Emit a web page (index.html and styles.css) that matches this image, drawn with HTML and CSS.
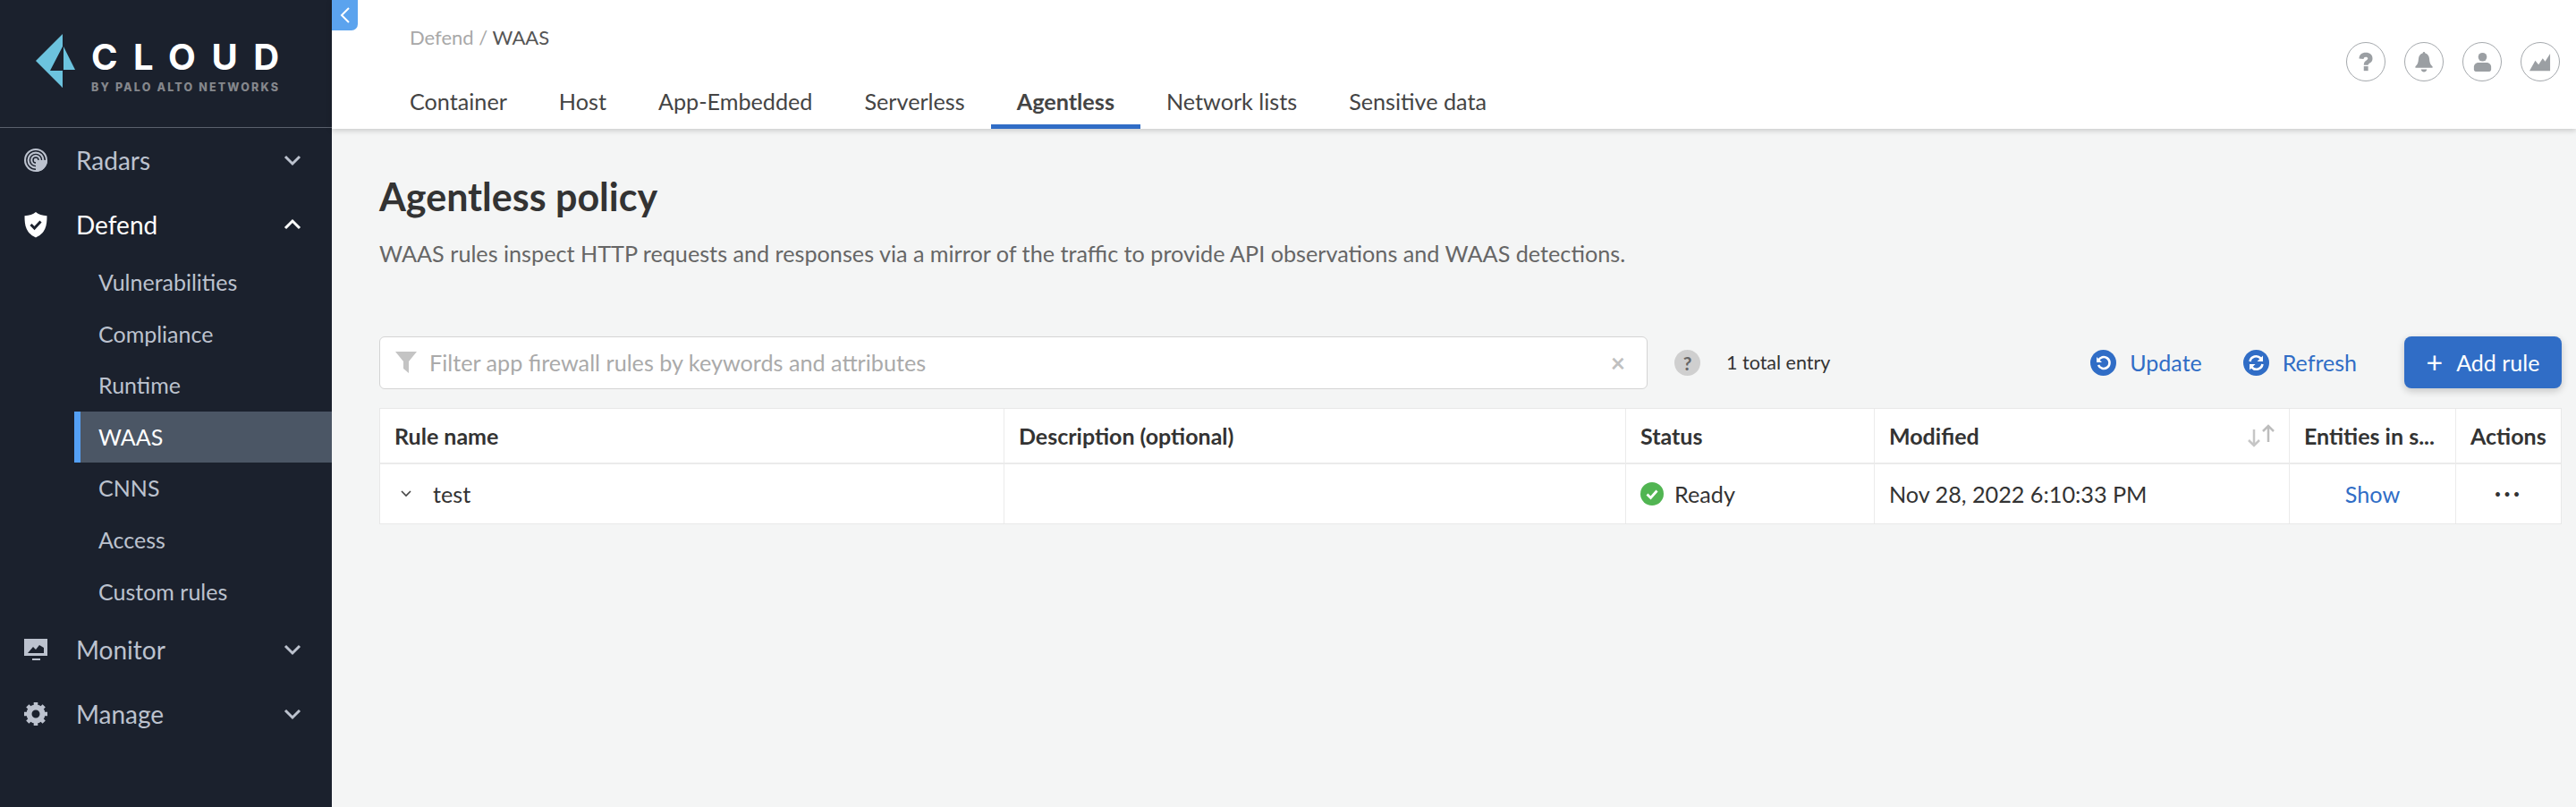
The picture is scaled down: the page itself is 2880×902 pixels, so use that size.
FILE: index.html
```html
<!DOCTYPE html>
<html lang="en">
<head>
    <meta charset="UTF-8">
    <title>Agentless policy | Defend / WAAS</title>
    <link rel="stylesheet" href="styles.css">
</head>
<body>
    <aside class="sidebar">
        <div class="logo">
            <svg class="logo-mark" width="46" height="62" viewBox="38 37 46 62">
                <polygon points="70,38 40,68 70,98 70,79 56,79 70,52" fill="#6cc3de"/>
                <polygon points="71,52 84,78 71,78" fill="#6cc3de"/>
                <polygon points="56,79 70,79 70,98" fill="#6cc3de"/>
            </svg>
            <div class="logo-text">
                <div class="logo-name">CLOUD</div>
                <div class="logo-sub">BY PALO ALTO NETWORKS</div>
            </div>
        </div>

        <nav class="nav">
            <div class="nav-item">
                <svg class="nav-icon" width="28" height="28" viewBox="0 0 28 28">
                    <circle cx="14" cy="14" r="13" fill="#bcc2ce"/>
                    <circle cx="14" cy="14" r="10.2" fill="none" stroke="#1b212d" stroke-width="1.4"/>
                    <circle cx="14" cy="14" r="6.6" fill="none" stroke="#1b212d" stroke-width="1.4"/>
                    <circle cx="14" cy="14" r="3" fill="none" stroke="#1b212d" stroke-width="1.4"/>
                    <path d="M14 14h13a13 13 0 0 1 -13 13z" fill="#bcc2ce"/>
                </svg>
                <span class="nav-label">Radars</span>
                <svg class="nav-caret" width="20" height="14" viewBox="0 0 20 14"><path d="M2 3l8 8 8-8"/></svg>
            </div>
            <div class="nav-item active">
                <svg class="nav-icon" width="28" height="30" viewBox="0 0 28 30">
                    <path d="M14 1c3 2.500 7 4 12.500 4.200 0 10 -1 19 -12.500 24.300C2.500 24.200 1.500 15.200 1.500 5.200 7 5 11 3.500 14 1z" fill="#fff"/>
                    <path d="M8.500 15l4 4 7-7.500" fill="none" stroke="#1b212d" stroke-width="3"/>
                </svg>
                <span class="nav-label">Defend</span>
                <svg class="nav-caret" width="20" height="14" viewBox="0 0 20 14"><path d="M2 11l8-8 8 8"/></svg>
            </div>

            <a class="sub-item">Vulnerabilities</a>
            <a class="sub-item">Compliance</a>
            <a class="sub-item">Runtime</a>
            <a class="sub-item current">WAAS</a>
            <a class="sub-item">CNNS</a>
            <a class="sub-item">Access</a>
            <a class="sub-item">Custom rules</a>

            <div class="nav-item">
                <svg class="nav-icon" width="28" height="26" viewBox="0 0 28 26">
                    <path d="M1 1h26v19H1z" fill="#bcc2ce"/>
                    <path d="M5 17l6-7 3 3 4-5 5 3v6z" fill="#1b212d"/>
                    <path d="M10 23h9v2h-9z" fill="#bcc2ce"/>
                </svg>
                <span class="nav-label">Monitor</span>
                <svg class="nav-caret" width="20" height="14" viewBox="0 0 20 14"><path d="M2 3l8 8 8-8"/></svg>
            </div>
            <div class="nav-item">
                <svg class="nav-icon" width="28" height="28" viewBox="0 0 28 28">
                    <circle cx="14" cy="14" r="7.500" fill="none" stroke="#bcc2ce" stroke-width="6"/>
                    <path d="M14 1v5M14 22v5M1 14h5M22 14h5M4.800 4.800l3.500 3.500M19.700 19.700l3.500 3.500M23.200 4.800l-3.500 3.500M8.300 19.700l-3.500 3.500" stroke="#bcc2ce" stroke-width="4.600"/>
                </svg>
                <span class="nav-label">Manage</span>
                <svg class="nav-caret" width="20" height="14" viewBox="0 0 20 14"><path d="M2 3l8 8 8-8"/></svg>
            </div>
        </nav>
    </aside>

    <button class="collapse">
        <svg width="14" height="20" viewBox="0 0 14 20"><path d="M11 2l-8 8 8 8"/></svg>
    </button>

    <main class="main">
        <header class="topbar">
            <div class="topbar-left">
                <div class="crumbs">Defend / <span class="crumb-now">WAAS</span></div>
                <div class="tabs">
                    <div class="tab">Container</div>
                    <div class="tab">Host</div>
                    <div class="tab">App-Embedded</div>
                    <div class="tab">Serverless</div>
                    <div class="tab selected">Agentless</div>
                    <div class="tab">Network lists</div>
                    <div class="tab">Sensitive data</div>
                </div>
            </div>
            <div class="top-icons">
                <div class="round-btn">
                    <svg width="18" height="22" viewBox="0 0 24 26" preserveAspectRatio="none" fill="#9b9fa3">
                        <path d="M2 9C2 4 6 1 12 1s10 3 10 7.500c0 4-2.500 5.300-4.500 6.500-1.500.9-2 1.500-2 2.500H9c0-3.500 1.500-4.800 3.500-6 1.500-.9 2.500-1.500 2.500-2.800 0-1.200-1.200-2-3-2-2 0-3 1-3.300 2.800z"/>
                        <path d="M9 19h6.500v6H9z"/>
                    </svg>
                </div>
                <div class="round-btn">
                    <svg width="20" height="23" viewBox="0 0 24 26" preserveAspectRatio="none" fill="#9b9fa3">
                        <path d="M12 0c1 0 1.500.7 1.700 1.700C17 2.500 19 5 19.300 9c.3 5 1.500 7 4.200 9.500v1.500H.5v-1.500C3.200 16 4.400 14 4.700 9 5 5 7 2.500 10.300 1.700 10.500.7 11 0 12 0z"/>
                        <path d="M8 22h8c-.5 2-2 3.500-4 3.500S8.500 24 8 22z"/>
                    </svg>
                </div>
                <div class="round-btn">
                    <svg width="21" height="23" viewBox="0 0 24 26" preserveAspectRatio="none" fill="#9b9fa3">
                        <circle cx="12" cy="6.500" r="5.500"/>
                        <path d="M1 19c0-3.500 3-5.500 6-5.500h10c3 0 6 2 6 5.500v3c0 2-1.500 3-3.500 3h-15C2.500 25 1 24 1 22z"/>
                    </svg>
                </div>
                <div class="round-btn">
                    <svg width="24" height="21" viewBox="0 0 26 24" preserveAspectRatio="none" fill="#9b9fa3">
                        <path d="M0 23L7 10l4 5 5-8 3 4 6-10v22z"/>
                    </svg>
                </div>
            </div>
        </header>

        <section class="content">
            <h1>Agentless policy</h1>
            <p class="desc">WAAS rules inspect HTTP requests and responses via a mirror of the traffic to provide API observations and WAAS detections.</p>

            <div class="toolbar">
                <div class="filter">
                    <svg class="filter-icon" width="26" height="26" viewBox="0 0 26 26" fill="#c4c4c4">
                        <path d="M1 1h24L16 12v13l-6-5v-8z"/>
                    </svg>
                    <span class="filter-text">Filter app firewall rules by keywords and attributes</span>
                    <span class="filter-clear">×</span>
                </div>
                <div class="help-dot">?</div>
                <div class="entries">1 total entry</div>
                <div class="actions">
                    <a class="link-btn">
                        <svg width="29" height="29" viewBox="0 0 29 29">
                            <circle cx="14.500" cy="14.500" r="14.500" fill="#306dc6"/>
                            <path d="M9 12a6.500 6.500 0 1 1 0 5" fill="none" stroke="#fff" stroke-width="2.600"/>
                            <path d="M7 8v6h6z" fill="#fff"/>
                        </svg>
                        Update
                    </a>
                    <a class="link-btn">
                        <svg width="29" height="29" viewBox="0 0 29 29">
                            <circle cx="14.500" cy="14.500" r="14.500" fill="#306dc6"/>
                            <path d="M7.500 13a7 7 0 0 1 12-3.500" fill="none" stroke="#fff" stroke-width="2.600"/>
                            <path d="M21.500 16a7 7 0 0 1 -12 3.500" fill="none" stroke="#fff" stroke-width="2.600"/>
                            <path d="M22 6.500v6.500h-6.500zM7 22.500V16h6.500z" fill="#fff"/>
                        </svg>
                        Refresh
                    </a>
                    <button class="add-btn"><span class="plus">+</span>Add rule</button>
                </div>
            </div>

            <div class="rules">
                <div class="cell head">Rule name</div>
                <div class="cell head">Description (optional)</div>
                <div class="cell head">Status</div>
                <div class="cell head sortable">
                    Modified
                    <svg class="sort" width="34" height="26" viewBox="0 0 34 26" fill="none" stroke="#c6c6c6" stroke-width="2.500">
                        <path d="M9 6v18M3 18l6 6 6-6"/>
                        <path d="M25 20V2M19 8l6-6 6 6" stroke="#bdbdbd"/>
                    </svg>
                </div>
                <div class="cell head clip">Entities in s...</div>
                <div class="cell head">Actions</div>

                <div class="cell name">
                    <svg width="14" height="10" viewBox="0 0 14 10" fill="none" stroke="#444" stroke-width="1.600"><path d="M2 2l5 5 5-5"/></svg>
                    test
                </div>
                <div class="cell"></div>
                <div class="cell status">
                    <svg width="26" height="26" viewBox="0 0 26 26">
                        <circle cx="13" cy="13" r="13" fill="#51b552"/>
                        <path d="M7.500 13.500l4 4 7-8" fill="none" stroke="#fff" stroke-width="2.800"/>
                    </svg>
                    Ready
                </div>
                <div class="cell">Nov 28, 2022 6:10:33 PM</div>
                <div class="cell center"><a class="show">Show</a></div>
                <div class="cell center dots">•••</div>
            </div>
        </section>
    </main>
</body>
</html>
```

FILE: styles.css
```css
* {
    margin: 0;
    padding: 0;
    box-sizing: border-box;
}

html, body {
    height: 100%;
}

body {
    display: flex;
    font-family: Lato, 'Open Sans', sans-serif;
    color: #333;
    background: #f4f5f5;
    overflow: hidden;
    position: relative;
}

/* Sidebar */
.sidebar {
    width: 371px;
    flex-shrink: 0;
    background: #1b212d;
    color: #bcc2ce;
}

.logo {
    height: 143px;
    border-bottom: 1px solid #5a606c;
    display: flex;
    align-items: flex-start;
    padding: 37px 0 0 38px;
    gap: 18px;
}

.logo-text {
    padding-top: 9px;
}

.logo-name {
    font-family: Inter, sans-serif;
    font-weight: 700;
    font-size: 40px;
    line-height: 36px;
    letter-spacing: 17.5px;
    color: #fff;
}

.logo-sub {
    font-family: Inter, sans-serif;
    font-weight: 800;
    font-size: 12.500px;
    line-height: 14px;
    letter-spacing: 2.150px;
    margin-top: 9px;
    color: #85878c;
    white-space: nowrap;
}

.nav-item {
    height: 72px;
    display: flex;
    align-items: center;
    padding: 0 34px 0 26px;
    font-size: 28px;
}

.nav-icon {
    width: 28px;
    flex-shrink: 0;
}

.nav-label {
    margin-left: 31px;
    flex: 1;
}

.nav-caret {
    fill: none;
    stroke: #bcc2ce;
    stroke-width: 3;
}

.nav-item.active {
    color: #fff;
}

.nav-item.active .nav-caret {
    stroke: #fff;
}

.sub-item {
    display: block;
    height: 57.600px;
    line-height: 57px;
    margin-left: 83px;
    padding-left: 27px;
    font-size: 25px;
}

.sub-item.current {
    background: #4b5665;
    border-left: 7px solid #54a0f5;
    padding-left: 20px;
    color: #fff;
}

.collapse {
    position: absolute;
    left: 371px;
    top: 0;
    width: 29px;
    height: 34px;
    background: #5ba3ee;
    border: none;
    border-radius: 0 0 7px 0;
    display: flex;
    align-items: center;
    justify-content: center;
}

.collapse svg {
    fill: none;
    stroke: #fff;
    stroke-width: 2;
}

/* Top bar */
.main {
    flex: 1;
    min-width: 0;
}

.topbar {
    height: 144px;
    background: #fff;
    box-shadow: 0 2px 6px rgba(0, 0, 0, 0.18);
    display: flex;
    justify-content: space-between;
    padding: 0 18px 0 58px;
}

.crumbs {
    padding: 28px 0 0 29px;
    height: 92px;
    font-size: 22px;
    line-height: 27px;
    color: #a8a8a8;
}

.crumb-now {
    color: #555;
}

.tabs {
    display: flex;
}

.tab {
    padding: 0 29px;
    height: 52px;
    line-height: 42px;
    font-size: 25.200px;
    color: #444;
}

.tab.selected {
    font-weight: 700;
    border-bottom: 5px solid #306dc6;
    color: #444;
}

.top-icons {
    display: flex;
    gap: 21px;
    padding-top: 47px;
}

.round-btn {
    width: 44px;
    height: 44px;
    border: 1px solid #a5a9ad;
    border-radius: 50%;
    display: flex;
    align-items: center;
    justify-content: center;
}

/* Page body */
.content {
    padding: 50px 16px 0 53px;
}

h1 {
    font-size: 43px;
    line-height: 52px;
    font-weight: 700;
    color: #333;
}

.desc {
    margin-top: 21px;
    font-size: 25.200px;
    line-height: 32px;
    color: #666;
}

.toolbar {
    display: flex;
    align-items: center;
    margin-top: 76px;
    height: 60px;
}

.filter {
    width: 1418px;
    height: 59px;
    background: #fff;
    border: 1px solid #d4d4d4;
    border-radius: 6px;
    display: flex;
    align-items: center;
    padding: 0 24px 0 16px;
}

.filter-text {
    margin-left: 13px;
    flex: 1;
    font-size: 25.200px;
    color: #aaa;
}

.filter-clear {
    font-size: 28px;
    font-weight: 700;
    color: #c0c0c0;
}

.help-dot {
    width: 29px;
    height: 29px;
    margin-left: 30px;
    border-radius: 50%;
    background: #cfcfcf;
    color: #666;
    font-size: 21px;
    font-weight: 700;
    text-align: center;
    line-height: 29px;
}

.entries {
    margin-left: 29px;
    font-size: 21.500px;
    color: #333;
}

.actions {
    margin-left: auto;
    display: flex;
    align-items: center;
}

.link-btn {
    display: flex;
    align-items: center;
    gap: 15px;
    margin-right: 46px;
    font-size: 25px;
    color: #306dc6;
}

.link-btn:nth-child(2) {
    margin-right: 53px;
}

.add-btn {
    width: 176px;
    height: 58px;
    border: none;
    border-radius: 8px;
    background: #306dc6;
    color: #fff;
    font-family: inherit;
    font-size: 25px;
    box-shadow: 0 3px 8px rgba(0, 0, 0, 0.2);
}

.plus {
    font-size: 32px;
    line-height: 26px;
    margin-right: 15px;
    vertical-align: -2px;
}

.rules {
    display: grid;
    grid-template-columns: 698px 695px 278px 464px 186px 1fr;
    grid-template-rows: 62px 66px;
    margin-top: 21px;
    background: #fff;
    border: 1px solid #e8e8e8;
}

.cell {
    display: flex;
    align-items: center;
    padding: 0 16px;
    font-size: 25.200px;
    color: #333;
    border-right: 1px solid #ebebeb;
    white-space: nowrap;
    min-width: 0;
}

.cell:nth-child(6n) {
    border-right: none;
}

.cell.head {
    font-weight: 700;
    font-size: 25px;
    border-bottom: 2px solid #ebebeb;
}

.cell.clip {
    overflow: hidden;
}

.sortable {
    justify-content: space-between;
    padding-right: 14px;
}

.name {
    gap: 23px;
    padding-left: 22px;
}

.status {
    gap: 12px;
}

.center {
    justify-content: center;
}

.show {
    color: #306dc6;
}

.dots {
    font-size: 13px;
    letter-spacing: 3px;
    color: #333;
}
```
